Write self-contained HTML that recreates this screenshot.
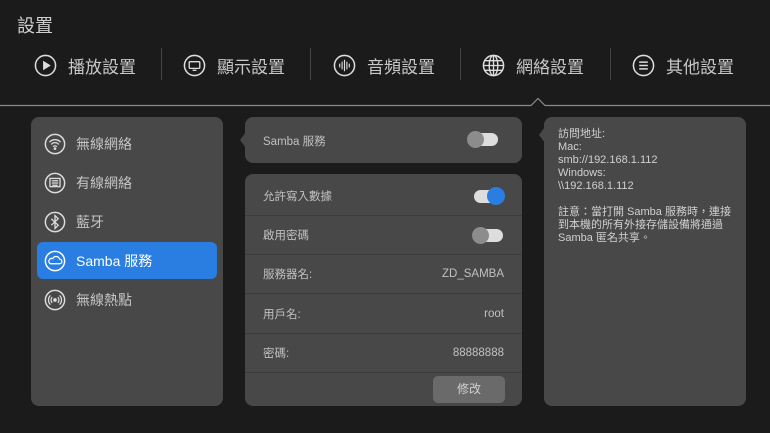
<!DOCTYPE html>
<html><head><meta charset="utf-8"><style>
*{margin:0;padding:0;box-sizing:border-box}
body{width:770px;height:433px;background:#1b1b1b;font-family:"Liberation Sans","Noto Sans CJK TC",sans-serif;position:relative;overflow:hidden;color:#bdbdbd}
.abs{position:absolute}
.title{left:17px;top:12px;font-size:18px;color:#d0d0d0}
.tab{top:52px;height:26px;display:flex;align-items:center;font-size:17px;color:#c8c8c8}
.tab svg{margin-right:11px}
.div{top:48px;width:1px;height:32px;background:#444}
.panel{background:#484848;border-radius:8px}
.li{left:37px;width:180px;height:37px;display:flex;align-items:center;font-size:14px;color:#c4c4c4;border-radius:6px}
.li svg{margin:0 10px 0 7px}
.row{left:245px;width:277px;height:39px;border-bottom:1px solid #3c3c3c;font-size:11.5px;color:#c0c0c0;display:flex;align-items:center;justify-content:space-between;padding:0 18px 0 18px}
.tg{position:relative;width:32px;height:17px}
.tg .tr{position:absolute;top:2px;left:1px;width:30px;height:13px;border-radius:7px;background:#ddd}
.tg .kn{position:absolute;top:0;width:17px;height:17px;border-radius:50%;background:#8c8c8c}
</style></head><body>
<div class="abs title">設置</div>

<div class="abs tab" style="left:34px"><svg width="23" height="23" viewBox="0 0 24 24"><circle cx="12" cy="12" r="10.5" fill="none" stroke="#ddd" stroke-width="1.6"/><path d="M9.5 7v10l8-5z" fill="#ddd"/></svg>播放設置</div>
<div class="abs div" style="left:161px"></div>
<div class="abs tab" style="left:183px"><svg width="23" height="23" viewBox="0 0 24 24"><circle cx="12" cy="12" r="10.5" fill="none" stroke="#ddd" stroke-width="1.6"/><rect x="6.5" y="8" width="11" height="7" rx="1" fill="none" stroke="#ddd" stroke-width="1.4"/><path d="M10 17h4" stroke="#ddd" stroke-width="1.4"/></svg>顯示設置</div>
<div class="abs div" style="left:310px"></div>
<div class="abs tab" style="left:333px"><svg width="23" height="23" viewBox="0 0 24 24"><circle cx="12" cy="12" r="10.5" fill="none" stroke="#ddd" stroke-width="1.6"/><path d="M7 10v4M9.5 8v8M12 6v12M14.5 8v8M17 10v4" stroke="#ddd" stroke-width="1.2"/></svg>音頻設置</div>
<div class="abs div" style="left:460px"></div>
<div class="abs tab" style="left:482px"><svg width="23" height="23" viewBox="0 0 24 24" fill="none" stroke="#ddd" stroke-width="1.4"><circle cx="12" cy="12" r="10.5" stroke-width="1.6"/><ellipse cx="12" cy="12" rx="4.5" ry="10.5"/><path d="M12 1.5v21M1.5 12h21M3 7h18M3 17h18"/></svg>網絡設置</div>
<div class="abs div" style="left:610px"></div>
<div class="abs tab" style="left:632px"><svg width="23" height="23" viewBox="0 0 24 24"><circle cx="12" cy="12" r="10.5" fill="none" stroke="#ddd" stroke-width="1.6"/><path d="M7.5 8.5h9M7.5 12h9M7.5 15.5h9" stroke="#ddd" stroke-width="1.6"/></svg>其他設置</div>

<svg class="abs" style="left:0;top:97px" width="770" height="10"><path d="M0 8.5H531l7-7 7 7H770" fill="none" stroke="#8a8a8a" stroke-width="1.2"/></svg>

<div class="abs panel" style="left:31px;top:117px;width:192px;height:289px"></div>
<div class="abs li" style="top:125px"><svg width="22" height="22" viewBox="0 0 24 24" fill="none" stroke="#ddd" stroke-width="1.4"><circle cx="12" cy="12" r="10.5" stroke-width="1.6"/><path d="M6 10a8 8 0 0 1 12 0M8 12.5a5 5 0 0 1 8 0M10 15a2.5 2.5 0 0 1 4 0"/><circle cx="12" cy="17" r=".8" fill="#ddd"/></svg>無線網絡</div>
<div class="abs li" style="top:164px"><svg width="22" height="22" viewBox="0 0 24 24" fill="none" stroke="#ddd" stroke-width="1.4"><circle cx="12" cy="12" r="10.5" stroke-width="1.6"/><rect x="6.5" y="7" width="11" height="9"/><path d="M8.5 9.5h7M8.5 12h7M9 14.5h6"/></svg>有線網絡</div>
<div class="abs li" style="top:203px"><svg width="22" height="22" viewBox="0 0 24 24" fill="none" stroke="#ddd" stroke-width="1.4"><circle cx="12" cy="12" r="10.5" stroke-width="1.6"/><path d="M8 8.5l7.5 7L12 19V5l3.5 3.5L8 15.5"/></svg>藍牙</div>
<div class="abs li" style="top:242px;background:#2a7de1;color:#fff"><svg width="22" height="22" viewBox="0 0 24 24" fill="none" stroke="#fff" stroke-width="1.4"><circle cx="12" cy="12" r="10.5" stroke-width="1.6"/><path d="M7 15h10a2.5 2.5 0 0 0 0-5 4 4 0 0 0-7.5-.5A2.8 2.8 0 0 0 7 15z"/></svg>Samba 服務</div>
<div class="abs li" style="top:281px"><svg width="22" height="22" viewBox="0 0 24 24" fill="none" stroke="#ddd" stroke-width="1.4"><circle cx="12" cy="12" r="10.5" stroke-width="1.6"/><circle cx="12" cy="12" r="1.3" fill="#ddd"/><path d="M9 9a4 4 0 0 0 0 6M15 9a4 4 0 0 1 0 6M7 7a7 7 0 0 0 0 10M17 7a7 7 0 0 1 0 10"/></svg>無線熱點</div>

<div class="abs panel" style="left:245px;top:117px;width:277px;height:46px"></div>
<svg class="abs" style="left:239px;top:132px" width="8" height="16"><path d="M7 0L1 8l6 8z" fill="#484848"/></svg>
<div class="abs" style="left:263px;top:133px;font-size:11.5px;color:#c0c0c0">Samba 服務</div>
<div class="abs tg" style="left:467px;top:131px"><div class="tr"></div><div class="kn" style="left:0"></div></div>

<div class="abs panel" style="left:245px;top:174px;width:277px;height:232px"></div>
<div class="abs row" style="top:177px"><span>允許寫入數據</span><div class="tg" style="width:30px"><div class="tr" style="left:0;width:26px"></div><div class="kn" style="left:13px;width:18px;height:18px;top:-1px;background:#2a7de1"></div></div></div>
<div class="abs row" style="top:216px"><span>啟用密碼</span><div class="tg"><div class="tr"></div><div class="kn" style="left:0;background:#8c8c8c"></div></div></div>
<div class="abs row" style="top:255px"><span>服務器名:</span><span>ZD_SAMBA</span></div>
<div class="abs row" style="top:295px"><span>用戶名:</span><span>root</span></div>
<div class="abs row" style="top:334px"><span>密碼:</span><span>88888888</span></div>
<div class="abs" style="left:433px;top:376px;width:72px;height:27px;background:#6a6a6a;border-radius:5px;color:#d0d0d0;font-size:12px;text-align:center;line-height:27px">修改</div>

<div class="abs panel" style="left:544px;top:117px;width:202px;height:289px"></div>
<svg class="abs" style="left:538px;top:127px" width="8" height="16"><path d="M7 0L1 8l6 8z" fill="#484848"/></svg>
<div class="abs" style="left:558px;top:128px;font-size:11px;line-height:13px;color:#d0d0d0;width:185px;white-space:nowrap">訪問地址:<br>Mac:<br>smb://192.168.1.112<br>Windows:<br>\\192.168.1.112<br><br>註意：當打開 Samba 服務時，連接<br>到本機的所有外接存儲設備將通過<br>Samba 匿名共享。</div>
</body></html>
